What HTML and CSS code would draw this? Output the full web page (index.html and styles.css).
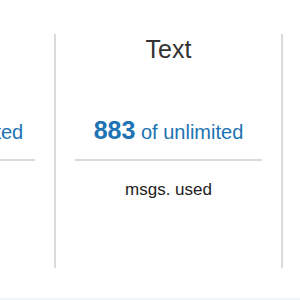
FILE: index.html
```html
<!DOCTYPE html>
<html lang="en">
<head>
    <meta charset="UTF-8">
    <meta name="viewport" content="width=device-width, initial-scale=1.0">
    <title>Usage</title>
    <link rel="stylesheet" href="styles.css">
</head>
<body>
    <div class="stats">
        <div class="stat">
            <div class="stat-title">Email</div>
            <div class="usage"><span class="count">1024</span> of unlimited</div>
            <div class="divider"></div>
            <div class="stat-label">msgs. used</div>
        </div>
        <div class="stat">
            <div class="stat-title">Text</div>
            <div class="usage"><span class="count">883</span> of unlimited</div>
            <div class="divider"></div>
            <div class="stat-label">msgs. used</div>
        </div>
        <div class="stat">
            <div class="stat-title">Voice</div>
            <div class="usage"><span class="count">12</span> of unlimited</div>
            <div class="divider"></div>
            <div class="stat-label">msgs. used</div>
        </div>
    </div>
    <div class="footer"></div>
</body>
</html>
```

FILE: styles.css
```css
body {
    margin: 0;
    font-family: "Liberation Sans", Arial, sans-serif;
    background-color: white;
    overflow: hidden;
    width: 300px;
    height: 300px;
}
.stats {
    display: flex;
    margin-top: 34px;
    margin-left: -171px;
}
.stat {
    flex: 0 0 auto;
    width: 225px;
    height: 234px;
    border-right: 2px solid #dadada;
    text-align: center;
    white-space: nowrap;
}
.stat-title {
    margin-top: 1px;
    font-size: 25px;
    line-height: 28px;
    color: #333;
}
.usage {
    margin-top: 53px;
    font-size: 20px;
    line-height: 28px;
    color: #1d73b3;
}
.count {
    font-size: 25px;
    font-weight: bold;
}
.divider {
    height: 2px;
    margin: 13px 19px 0;
    background-color: #dadada;
}
.stat-label {
    margin-top: 19px;
    font-size: 17px;
    line-height: 20px;
    color: #222;
}
.footer {
    margin-top: 30px;
    height: 10px;
    background-color: #eef4f9;
}
```
